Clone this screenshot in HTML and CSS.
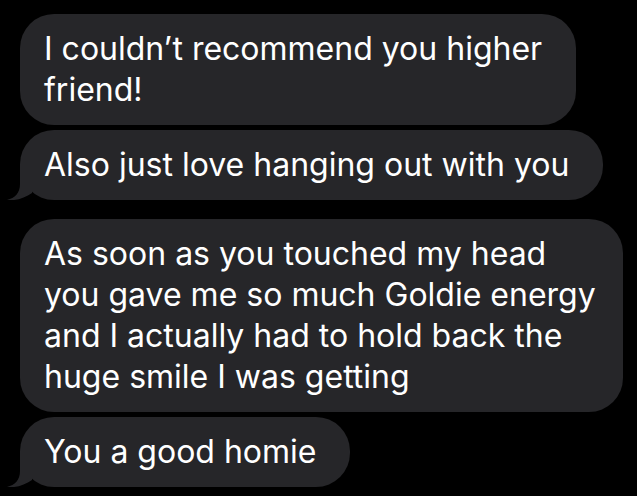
FILE: index.html
```html
<!DOCTYPE html>
<html>
<head>
<meta charset="utf-8">
<link rel="stylesheet" href="styles.css">
</head>
<body>
<div class="thread">
  <div class="bubble">I couldn’t recommend you higher<br>friend!</div>
  <div class="bubble tailed">Also just love hanging out with you<svg class="tail" viewBox="0 0 30 36" width="30" height="36"><path d="M15 0 L15 20 C15 29 10 34 2 36 C11 37 20 34 27 29 L27 0 Z"/></svg></div>
  <div class="bubble spaced">As soon as you touched my head<br>you gave me so much Goldie energy<br>and I actually had to hold back the<br>huge smile I was getting</div>
  <div class="bubble tailed">You a good homie<svg class="tail" viewBox="0 0 30 36" width="30" height="36"><path d="M15 0 L15 20 C15 29 10 34 2 36 C11 37 20 34 27 29 L27 0 Z"/></svg></div>
</div>
</body>
</html>
```
FILE: styles.css
```css
html, body {
  margin: 0;
  padding: 0;
  background: #000;
}
body {
  width: 637px;
  height: 496px;
  overflow: hidden;
}
.thread {
  display: flex;
  flex-direction: column;
  align-items: flex-start;
  gap: 5px;
  padding: 14px 0 0 20px;
}
.bubble {
  position: relative;
  width: fit-content;
  white-space: nowrap;
  background: #262629;
  color: #fff;
  font-family: Inter, "Liberation Sans", sans-serif;
  font-size: 32px;
  line-height: 41px;
  padding: 14px 34px 15px 24px;
  border-radius: 34px;
}
.spaced {
  margin-top: 14px;
  padding-right: 27px;
}
.tail {
  position: absolute;
  left: -15px;
  bottom: 0;
  fill: #262629;
}
```
